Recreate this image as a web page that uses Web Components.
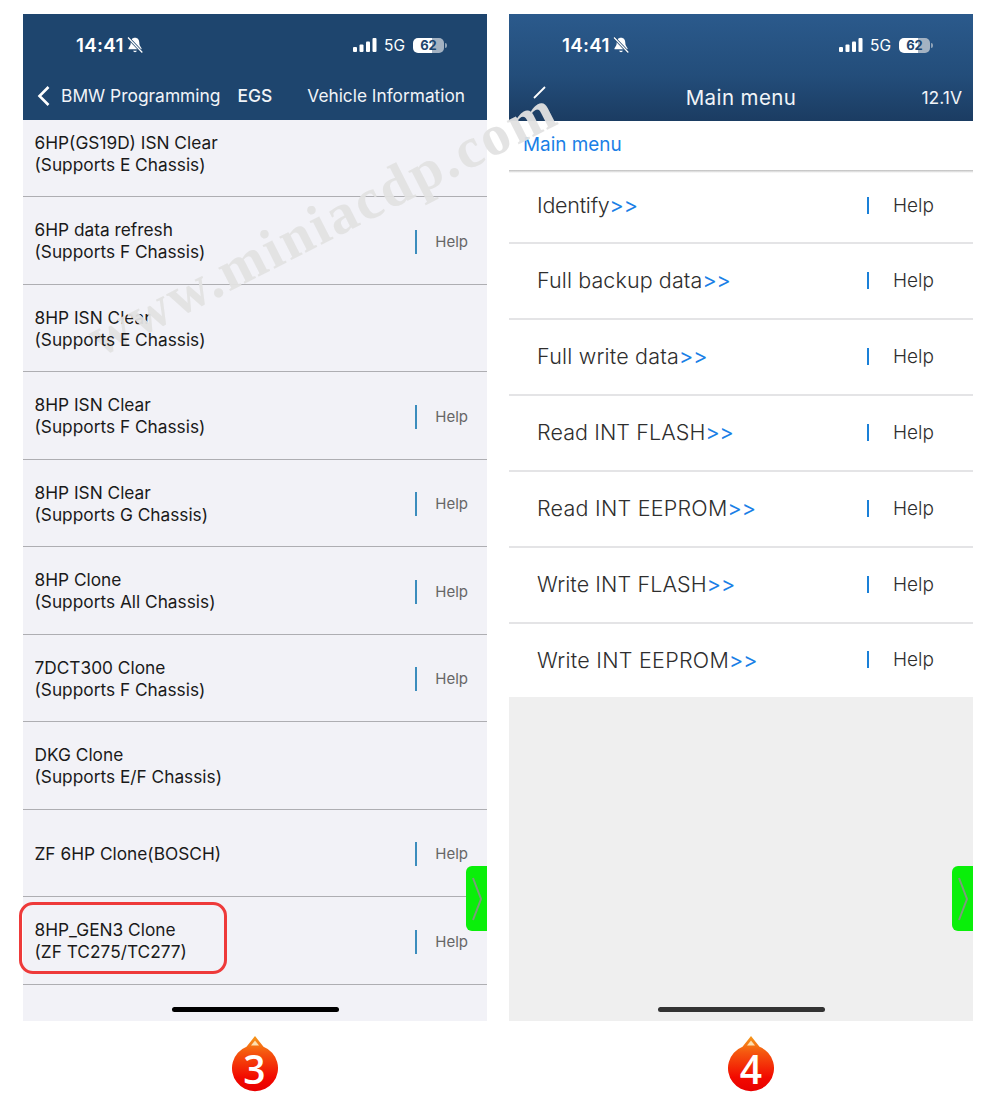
<!DOCTYPE html>
<html>
<head>
<meta charset="utf-8">
<title>EGS</title>
<style>
    html, body { margin: 0; background: #fff; }
    body { width: 1000px; height: 1112px; overflow: hidden; font-family: Inter, "Liberation Sans", sans-serif; }
    /* second line of the row the watermark runs through stays readable */
    .over { position: relative; z-index: 6; }
</style>
</head>
<body>
<demo-page>
    <phone-screen slot="left">
        <status-bar></status-bar>
        <nav-left></nav-left>
        <egs-list>
            <egs-row first>6HP(GS19D) ISN Clear<br>(Supports E Chassis)</egs-row>
            <egs-row help>6HP data refresh<br>(Supports F Chassis)</egs-row>
            <egs-row under>8HP ISN Clear<br><span class="over">(Supports E Chassis)</span></egs-row>
            <egs-row help>8HP ISN Clear<br>(Supports F Chassis)</egs-row>
            <egs-row help>8HP ISN Clear<br>(Supports G Chassis)</egs-row>
            <egs-row help>8HP Clone<br>(Supports All Chassis)</egs-row>
            <egs-row help>7DCT300 Clone<br>(Supports F Chassis)</egs-row>
            <egs-row>DKG Clone<br>(Supports E/F Chassis)</egs-row>
            <egs-row help>ZF 6HP Clone(BOSCH)</egs-row>
            <egs-row help marked>8HP_GEN3 Clone<br>(ZF TC275/TC277)</egs-row>
        </egs-list>
        <side-tab></side-tab>
        <home-bar color="#000"></home-bar>
    </phone-screen>
    <phone-screen slot="right" gradient>
        <status-bar></status-bar>
        <nav-main></nav-main>
        <bread-crumb>Main menu</bread-crumb>
        <menu-list>
            <menu-row style="letter-spacing:-.25px">Identify</menu-row>
            <menu-row style="letter-spacing:.1px">Full backup data</menu-row>
            <menu-row style="letter-spacing:.2px">Full write data</menu-row>
            <menu-row style="letter-spacing:.08px">Read INT FLASH</menu-row>
            <menu-row style="letter-spacing:.24px">Read INT EEPROM</menu-row>
            <menu-row style="letter-spacing:.1px">Write INT FLASH</menu-row>
            <menu-row style="letter-spacing:.26px" last>Write INT EEPROM</menu-row>
        </menu-list>
        <side-tab></side-tab>
        <home-bar color="#333"></home-bar>
    </phone-screen>
    <step-badge slot="badge-left">3</step-badge>
    <step-badge slot="badge-right">4</step-badge>
    <water-mark slot="mark">www.miniacdp.com</water-mark>
</demo-page>

<script>
class DemoPage extends HTMLElement {
    constructor() {
        super();
        this.attachShadow({ mode: 'open' });
        this.shadowRoot.innerHTML = `
            <style>
                :host { display: block; position: relative; width: 1000px; height: 1112px; overflow: hidden; }
                .screens { display: flex; gap: 22px; padding: 14px 0 0 23px; }
                .badges { display: flex; gap: 22px; padding: 15px 0 0 23px; }
                .cell { width: 464px; display: flex; }
                .cell.l { justify-content: center; padding-right: 1px; box-sizing: border-box; }
                .cell.r { justify-content: center; padding-left: 20px; box-sizing: border-box; }
            </style>
            <div class="screens"><slot name="left"></slot><slot name="right"></slot></div>
            <div class="badges">
                <div class="cell l"><slot name="badge-left"></slot></div>
                <div class="cell r"><slot name="badge-right"></slot></div>
            </div>
            <slot name="mark"></slot>
        `;
    }
}

class PhoneScreen extends HTMLElement {
    constructor() {
        super();
        this.attachShadow({ mode: 'open' });
        this.shadowRoot.innerHTML = `
            <style>
                :host { display: flex; flex-direction: column; position: relative; width: 464px; height: 1007px; background: #f2f2f7; color: #111; }
                :host([gradient]) { background: #efefef; }
            </style>
            <slot></slot>
        `;
    }
}

class StatusBar extends HTMLElement {
    constructor() {
        super();
        this.attachShadow({ mode: 'open' });
        this.shadowRoot.innerHTML = `
            <style>
                :host { display: flex; align-items: center; height: 62px; padding: 0 40px 0 53px; color: #fff; background: #1e456e; }
                .time { font-size: 18.800px; font-weight: 600; letter-spacing: 0.300px; }
                .bell { margin-left: 2px; }
                .right { margin-left: auto; display: flex; align-items: center; }
                .five { font-size: 15.500px; margin: 0 8px 0 7px; }
                .batt { position: relative; width: 31px; height: 15px; border-radius: 5px; font-size: 13px; font-weight: 700; color: #1e456e; text-align: center; line-height: 15px;
                        background: linear-gradient(90deg, #fff 62%, #a4b2c2 62%); }
                .nub { width: 2px; height: 5px; margin-left: 1px; background: #8fa3b8; border-radius: 0 2px 2px 0; }
            </style>
            <span class="time">14:41</span>
            <svg class="bell" width="18" height="18" viewBox="0 0 16 16">
                <path d="M8 1.500c-2.600 0-3.800 2-3.800 4.300 0 2.600-1 3.700-2 5v.9h11.600v-.9c-1-1.300-2-2.400-2-5C11.800 3.500 10.600 1.500 8 1.500z" fill="#fff"/>
                <path d="M6.300 13.200a1.800 1.800 0 0 0 3.400 0z" fill="#fff"/>
                <path d="M1.800 1.300L14.500 14.700" stroke="#1e456e" stroke-width="2.400"/>
                <path d="M1.800 1.300L14.500 14.700" stroke="#fff" stroke-width="1.100"/>
            </svg>
            <div class="right">
                <svg width="24" height="14" viewBox="0 0 24 14" fill="#fff">
                    <rect x="0" y="9" width="4" height="5" rx="1"/>
                    <rect x="6.500" y="6.500" width="4" height="7.500" rx="1"/>
                    <rect x="13" y="3.500" width="4" height="10.500" rx="1"/>
                    <rect x="19.500" y="0" width="4" height="14" rx="1"/>
                </svg>
                <span class="five">5G</span>
                <span class="batt">62</span>
                <span class="nub"></span>
            </div>
        `;
    }
}

class NavLeft extends HTMLElement {
    constructor() {
        super();
        this.attachShadow({ mode: 'open' });
        this.shadowRoot.innerHTML = `
            <style>
                :host { display: flex; align-items: center; height: 44px; padding: 0 22px 5px 14px; box-sizing: border-box; color: #f1f4f8; background: #1e456e; font-size: 17.400px; }
                .back { margin-right: 10px; }
                .egs { margin-left: 17px; font-weight: 500; }
                .info { margin-left: auto; font-size: 17.300px; }
            </style>
            <svg class="back" width="14" height="22" viewBox="0 0 14 22"><path d="M11.500 2L2.500 11l9 9" fill="none" stroke="#fff" stroke-width="2.600"/></svg>
            <span>BMW Programming</span>
            <span class="egs">EGS</span>
            <span class="info">Vehicle Information</span>
        `;
    }
}

class NavMain extends HTMLElement {
    constructor() {
        super();
        this.attachShadow({ mode: 'open' });
        this.shadowRoot.innerHTML = `
            <style>
                :host { display: flex; align-items: center; justify-content: center; position: relative; height: 45px; padding-bottom: 2px; box-sizing: border-box; color: #f1f4f8; background: #1c3f66; font-size: 20.500px; letter-spacing: 0.400px; }
                .back { position: absolute; left: 23px; top: 9px; }
                .volt { position: absolute; right: 11px; font-size: 17.500px; letter-spacing: 0; }
            </style>
            <svg class="back" width="16" height="16" viewBox="0 0 16 16"><path d="M13 2L2 13" fill="none" stroke="#fff" stroke-width="1.800"/></svg>
            <span>Main menu</span>
            <span class="volt">12.1V</span>
        `;
    }
}

class EgsList extends HTMLElement {
    constructor() {
        super();
        this.attachShadow({ mode: 'open' });
        this.shadowRoot.innerHTML = `
            <style>:host { display: flex; flex-direction: column; border-top: 1px solid #f2f2f7; }</style>
            <slot></slot>
        `;
    }
}

class EgsRow extends HTMLElement {
    constructor() {
        super();
        this.attachShadow({ mode: 'open' });
        this.shadowRoot.innerHTML = `
            <style>
                :host { display: flex; align-items: center; position: relative; height: 86.500px; padding: 0 19px 0 11.500px; border-bottom: 1px solid #aeaeb2; font-size: 17.300px; line-height: 22px; color: #1a1a1a; }
                :host([first]) { height: 75px; align-items: flex-start; }
                :host([first]) .text { padding-top: 11px; }
                .text { flex: 1; padding-top: 2px; position: relative; z-index: 6; }
                :host([under]) .text { z-index: auto; }
                .help { display: none; align-items: center; font-size: 15px; color: #666; padding-top: 3px; }
                :host([help]) .help { display: flex; }
                .bar { width: 2px; height: 24px; background: #3c8dbd; margin-right: 18.500px; }
                .mark { display: none; position: absolute; left: -4px; top: 5px; width: 202px; height: 66px; border: 3px solid #ee3a3a; border-radius: 14px; }
                :host([marked]) .mark { display: block; }
            </style>
            <div class="text"><slot></slot></div>
            <div class="help"><span class="bar"></span><span>Help</span></div>
            <div class="mark"></div>
        `;
    }
}

class BreadCrumb extends HTMLElement {
    constructor() {
        super();
        this.attachShadow({ mode: 'open' });
        this.shadowRoot.innerHTML = `
            <style>
                :host { display: flex; align-items: center; height: 49px; padding: 0 14px 2px; box-sizing: border-box; background: #fff; color: #1a7fe6; font-size: 18.900px; position: relative; z-index: 1; }
                :host::after { content: ""; position: absolute; left: 0; right: 0; top: 100%; height: 3px; background: linear-gradient(#bdbdbd, #e6e6e6 60%, #fff); }
            </style>
            <slot></slot>
        `;
    }
}

class MenuList extends HTMLElement {
    constructor() {
        super();
        this.attachShadow({ mode: 'open' });
        this.shadowRoot.innerHTML = `
            <style>:host { display: flex; flex-direction: column; background: #fff; }</style>
            <slot></slot>
        `;
    }
}

class MenuRow extends HTMLElement {
    constructor() {
        super();
        this.attachShadow({ mode: 'open' });
        this.shadowRoot.innerHTML = `
            <style>
                :host { display: flex; align-items: center; height: 74px; padding: 0 39px 0 28px; border-bottom: 2px solid #e4e4e6; font-size: 21.500px; font-weight: 300; color: #2e2e2e; }
                :host(:first-child) { height: 72px; }
                :host([last]) { border-bottom: 0; height: 73px; }
                .label { flex: 1; padding-bottom: 2px; }
                .more { color: #1a7fe6; letter-spacing: 0; font-weight: 400; }
                .help { display: flex; align-items: center; font-size: 19px; font-weight: 300; letter-spacing: 0; color: #2e2e2e; padding-bottom: 2px; }
                .bar { width: 2px; height: 17px; background: #1a80d8; margin-right: 24px; }
            </style>
            <div class="label"><slot></slot><span class="more">&gt;&gt;</span></div>
            <div class="help"><span class="bar"></span><span>Help</span></div>
        `;
    }
}

class SideTab extends HTMLElement {
    constructor() {
        super();
        this.attachShadow({ mode: 'open' });
        this.shadowRoot.innerHTML = `
            <style>
                :host { display: block; position: absolute; right: 0; top: 852px; width: 21px; height: 65px; background: #0aef0a; border-radius: 6px 0 0 6px; z-index: 2; }
                svg { display: block; margin: 11px 0 0 5px; }
            </style>
            <svg width="12" height="44" viewBox="0 0 12 44"><path d="M2 1L10 22 2 43" fill="none" stroke="#7d9a7d" stroke-width="2"/></svg>
        `;
    }
}

class HomeBar extends HTMLElement {
    constructor() {
        super();
        this.attachShadow({ mode: 'open' });
        const color = this.getAttribute('color') || '#000';
        this.shadowRoot.innerHTML = `
            <style>
                :host { display: block; position: absolute; left: 149px; bottom: 9px; width: 167px; height: 5px; border-radius: 3px; background: ${color}; }
            </style>
        `;
    }
}

class StepBadge extends HTMLElement {
    constructor() {
        super();
        this.attachShadow({ mode: 'open' });
        this.shadowRoot.innerHTML = `
            <style>
                :host { display: block; position: relative; width: 46px; height: 56px; }
                svg { display: block; }
                .num { position: absolute; left: 0; right: 0; top: 10px; text-align: center; font-family: "Open Sans", "Liberation Sans", sans-serif; font-weight: 600; font-size: 39px; line-height: 46px; color: #fff; }
            </style>
            <svg width="46" height="56" viewBox="0 0 46 56">
                <defs>
                    <linearGradient id="drop" x1="0" y1="0" x2="0" y2="1">
                        <stop offset="0" stop-color="#f59a1c"/>
                        <stop offset=".3" stop-color="#f5560f"/>
                        <stop offset=".75" stop-color="#f20a00"/>
                        <stop offset="1" stop-color="#e80000"/>
                    </linearGradient>
                </defs>
                <path d="M23 0L31.500 10.800A23 23 0 1 1 14.500 10.800z" fill="url(#drop)"/>
                <path d="M23 4.500L27 9.500H19z" fill="#fde0b0"/>
            </svg>
            <div class="num"><slot></slot></div>
        `;
    }
}

class WaterMark extends HTMLElement {
    constructor() {
        super();
        this.attachShadow({ mode: 'open' });
        this.shadowRoot.innerHTML = `
            <style>
                :host { display: block; position: absolute; left: 62px; top: 194px; width: 520px; text-align: center; white-space: nowrap; pointer-events: none; z-index: 5;
                        font-family: "Liberation Serif", serif; font-weight: 700; font-size: 57px; line-height: 57px; letter-spacing: 2.500px; color: rgba(226,226,226,.95); transform: rotate(-27deg); }
            </style>
            <slot></slot>
        `;
    }
}

customElements.define('demo-page', DemoPage);
customElements.define('phone-screen', PhoneScreen);
customElements.define('status-bar', StatusBar);
customElements.define('nav-left', NavLeft);
customElements.define('nav-main', NavMain);
customElements.define('egs-list', EgsList);
customElements.define('egs-row', EgsRow);
customElements.define('bread-crumb', BreadCrumb);
customElements.define('menu-list', MenuList);
customElements.define('menu-row', MenuRow);
customElements.define('side-tab', SideTab);
customElements.define('home-bar', HomeBar);
customElements.define('step-badge', StepBadge);
customElements.define('water-mark', WaterMark);

// right screen has the lighter gradient head
document.querySelector('phone-screen[gradient] status-bar').style.background = 'linear-gradient(#2b5a8c, #234d7a)';
document.querySelector('phone-screen[gradient] nav-main').style.background = 'linear-gradient(#234d7a, #1b3c62)';
</script>
</body>
</html>
